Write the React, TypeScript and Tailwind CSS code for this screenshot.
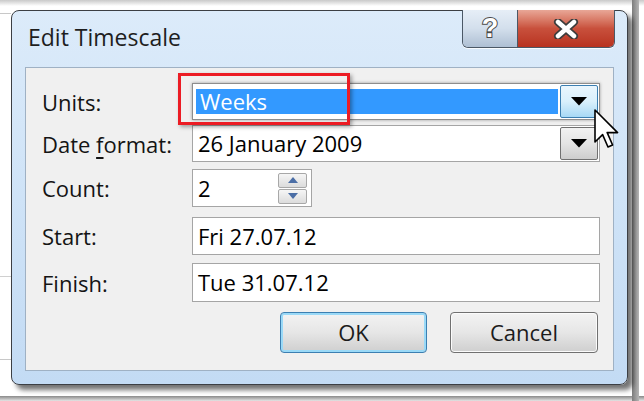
import React from "react";

const font = { fontFamily: '"Open Sans", "Noto Sans", sans-serif' };

function Tri({ className = "" }: { className?: string }) {
  return (
    <svg width="16" height="9" viewBox="0 0 16 9" className={className}>
      <path d="M0 0 H16 L8 8.5 Z" fill="#000" />
    </svg>
  );
}

export default function App() {
  return (
    <div
      className="relative w-[644px] h-[401px] overflow-hidden bg-white text-[22px] leading-[30px] text-[#141414]"
      style={font}
    >
      {/* backdrop hints */}
      <div className="absolute left-0 top-0 w-[644px] h-[6px] bg-gradient-to-b from-[#c9c9c9] to-white" />
      <div className="absolute left-0 top-[13px] w-[11px] h-px bg-[#c8c8c8]" />
      <div className="absolute left-0 top-[276px] w-[11px] h-px bg-[#d0d0d0]" />
      <div className="absolute left-0 top-[359px] w-[11px] h-px bg-[#c8c8c8]" />
      <div className="absolute left-0 top-[396px] w-[644px] h-[5px] bg-gradient-to-b from-[#8a8a8a] to-[#e5e5e5]" />
      <div className="absolute left-[632px] top-0 w-[7px] h-[401px] bg-gradient-to-r from-[#7d7d7d] to-[#b5b5b5]" />

      {/* window */}
      <div className="relative ml-[11px] mt-[10px] w-[617px] h-[375px] rounded-[8px] border border-[#3c3f44] bg-gradient-to-b from-[#dcebfa] via-[#cfe3f7] to-[#c3dbf4] shadow-[5px_5px_5px_rgba(0,0,0,0.55)] flex flex-col">
        {/* title bar */}
        <div className="h-[56px] flex items-start justify-between">
          <div className="pl-[16px] pt-[11px] text-[23px] text-[#1e1e1e]">Edit Timescale</div>
          <div className="mr-[12px] -mt-[1px] flex h-[38px] rounded-b-[6px] border border-t-0 border-[#4b5866] overflow-hidden shadow-[0_1px_0_rgba(255,255,255,0.8)]">
            <div className="w-[55px] h-full flex items-center justify-center bg-gradient-to-b from-[#e6eef7] via-[#d3dfec] to-[#aebfd3] border-r border-[#4b5866]">
              <span className="text-[27px] font-bold text-white leading-none [-webkit-text-stroke:2px_#4a4a4a] [paint-order:stroke_fill]" style={{ fontFamily: '"Liberation Sans", sans-serif' }}>
                ?
              </span>
            </div>
            <div className="w-[96px] h-full flex items-center justify-center bg-gradient-to-b from-[#e8a797] via-[#c8503c] to-[#b8321f]">
              <svg width="26" height="20" viewBox="0 0 26 20">
                <path d="M5 3 L21 17 M21 3 L5 17" stroke="#3d3d3d" strokeWidth="8" strokeLinecap="round" />
                <path d="M5 3 L21 17 M21 3 L5 17" stroke="#ffffff" strokeWidth="4.5" strokeLinecap="round" />
              </svg>
            </div>
          </div>
        </div>

        {/* client area */}
        <div className="mx-[13px] w-[589px] h-[304px] border border-[#9fb1c4] bg-[#f0f0f0] flex flex-col pl-[16px] pr-[13px]">
          {/* Units */}
          <div className="mt-[15px] h-[37px] flex items-center">
            <div className="w-[150px]">Units:</div>
            <div className="w-[408px] h-[37px] border border-[#8d8d8d] p-[1px] flex bg-white shadow-[0_0_3px_rgba(0,0,0,0.35)]">
              <div className="flex-1 flex items-center pl-[2px] pr-[2px]">
                <div className="w-full h-[25px] bg-[#3399ff] text-white leading-[25px] pl-[4px]">Weeks</div>
              </div>
              <div className="w-[38px] h-[33px] border border-[#3c7fb1] rounded-[2px] bg-gradient-to-b from-[#eaf6fd] via-[#d9f0fc] to-[#a7d9f5] flex items-center justify-center">
                <Tri />
              </div>
            </div>
          </div>

          {/* Date format */}
          <div className="mt-[5px] h-[37px] flex items-center">
            <div className="w-[150px]">
              Date <span className="underline underline-offset-[4px]">f</span>ormat:
            </div>
            <div className="w-[408px] h-[37px] border border-[#a5a5a5] p-[1px] flex bg-white">
              <div className="flex-1 pl-[4px] leading-[33px] text-black">26 January 2009</div>
              <div className="w-[38px] h-[33px] border border-[#707070] rounded-[2px] bg-gradient-to-b from-[#f2f2f2] via-[#e4e4e4] to-[#cdcdcd] flex items-center justify-center">
                <Tri />
              </div>
            </div>
          </div>

          {/* Count */}
          <div className="mt-[7px] h-[38px] flex items-center">
            <div className="w-[150px]">Count:</div>
            <div className="w-[120px] h-[38px] border border-[#a5a5a5] bg-white flex items-center">
              <div className="flex-1 pl-[5px] text-black">2</div>
              <div className="mr-[4px] flex flex-col gap-[1px]">
                <div className="w-[29px] h-[15px] border border-[#a8a8a8] rounded-[2px] bg-gradient-to-b from-[#f6f6f6] to-[#dcdcdc] flex items-center justify-center">
                  <svg width="10" height="6" viewBox="0 0 10 6"><path d="M0 6 L5 0 L10 6 Z" fill="#4b6ea6" /></svg>
                </div>
                <div className="w-[29px] h-[15px] border border-[#a8a8a8] rounded-[2px] bg-gradient-to-b from-[#f6f6f6] to-[#dcdcdc] flex items-center justify-center">
                  <svg width="10" height="6" viewBox="0 0 10 6"><path d="M0 0 L10 0 L5 6 Z" fill="#4b6ea6" /></svg>
                </div>
              </div>
            </div>
          </div>

          {/* Start */}
          <div className="mt-[10px] h-[38px] flex items-center">
            <div className="w-[150px]">Start:</div>
            <div className="w-[408px] h-[38px] border border-[#a5a5a5] bg-white pl-[5px] leading-[36px] text-black">Fri 27.07.12</div>
          </div>

          {/* Finish */}
          <div className="mt-[8px] h-[39px] flex items-center">
            <div className="w-[150px]">Finish:</div>
            <div className="w-[408px] h-[39px] border border-[#a5a5a5] bg-white pl-[5px] leading-[37px] text-black">Tue 31.07.12</div>
          </div>

          {/* Buttons */}
          <div className="mt-[10px] flex justify-end gap-[23px] pr-[2px]">
            <button className="w-[147px] h-[41px] rounded-[4px] border border-[#3c7fb1] shadow-[inset_0_0_0_2px_#9ad9f7] bg-gradient-to-b from-[#f3f3f3] via-[#e6e6e6] to-[#cfcfcf] text-[#1b1b1b] leading-[39px]">
              OK
            </button>
            <button className="w-[148px] h-[41px] rounded-[4px] border border-[#707070] shadow-[inset_0_0_0_1px_#fbfbfb] bg-gradient-to-b from-[#f3f3f3] via-[#e6e6e6] to-[#cfcfcf] text-[#1b1b1b] leading-[39px]">
              Cancel
            </button>
          </div>
        </div>
      </div>

      {/* red annotation box */}
      <div className="absolute left-[178px] top-[73px] w-[172px] h-[52px] border-[3px] border-[#ec1c24] shadow-[2px_2px_4px_rgba(0,0,0,0.35)]" />

      {/* mouse cursor */}
      <svg className="absolute left-[594px] top-[109px]" width="26" height="40" viewBox="0 0 13 20">
        <path d="M0.5 0.5 L0.5 16.5 L4.3 12.8 L7 19 L9.3 18 L6.6 11.8 L11.8 11.8 Z" fill="#fff" stroke="#000" strokeWidth="0.8" strokeLinejoin="round" />
      </svg>
    </div>
  );
}
